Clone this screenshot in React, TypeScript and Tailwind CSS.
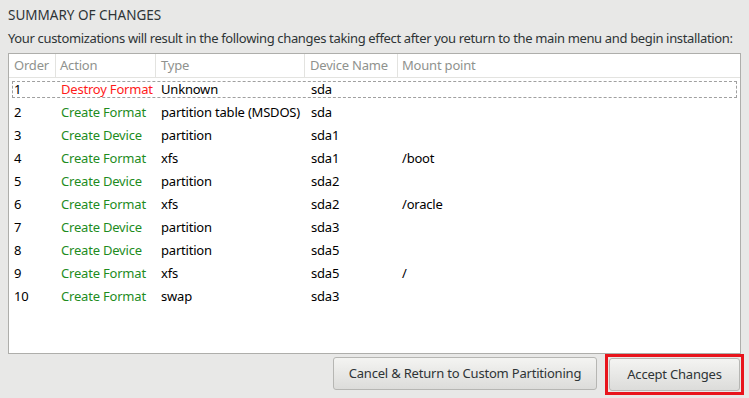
import React from "react";

const rows: [string, string, string, string, string][] = [
  ["1", "Destroy Format", "Unknown", "sda", ""],
  ["2", "Create Format", "partition table (MSDOS)", "sda", ""],
  ["3", "Create Device", "partition", "sda1", ""],
  ["4", "Create Format", "xfs", "sda1", "/boot"],
  ["5", "Create Device", "partition", "sda2", ""],
  ["6", "Create Format", "xfs", "sda2", "/oracle"],
  ["7", "Create Device", "partition", "sda3", ""],
  ["8", "Create Device", "partition", "sda5", ""],
  ["9", "Create Format", "xfs", "sda5", "/"],
  ["10", "Create Format", "swap", "sda3", ""],
];

export default function App() {
  return (
    <div
      className="w-[749px] h-[398px] bg-[#e8e8e7] text-[#2e3436] text-[13px] tracking-[-0.2px] flex flex-col overflow-hidden"
      style={{ fontFamily: '"Noto Sans", sans-serif' }}
    >
      <div className="pl-[8px] pt-[5px] leading-[20px] h-[25px] text-[13.5px] tracking-[0px]">SUMMARY OF CHANGES</div>
      <div className="pl-[8px] pt-[3px] leading-[20px] h-[28px] whitespace-nowrap tracking-[-0.35px]">
        Your customizations will result in the following changes taking effect after you return to the main menu and begin installation:
      </div>
      <div className="ml-[8px] w-[733px] h-[301px] bg-white border border-[#aeaeab] flex flex-col">
        <div className="flex h-[24px] border-b border-[#e3e3e0] text-[#8f928e] leading-[23px]">
          <div className="w-[47px] pl-[5px] border-r border-[#e3e3e0]">Order</div>
          <div className="w-[100px] pl-[4px] border-r border-[#e3e3e0]">Action</div>
          <div className="w-[149px] pl-[5px] border-r border-[#e3e3e0]">Type</div>
          <div className="w-[93px] pl-[5px] border-r border-[#e3e3e0]">Device Name</div>
          <div className="flex-1 pl-[4px]">Mount point</div>
        </div>
        <div className="flex flex-col">
          {rows.map((r, i) => (
            <div key={i} className="h-[23px] px-[3px] py-[3px]">
              <div
                className={
                  "flex h-full items-center text-black border " +
                  (i === 0 ? "border-dashed border-[#a0a0a0]" : "border-transparent")
                }
              >
                <div className="w-[48px] pl-[1px]">{r[0]}</div>
                <div className={"w-[100px] " + (r[1].startsWith("Destroy") ? "text-[#ff1a1a]" : "text-[#1e8c1e]")}>
                  {r[1]}
                </div>
                <div className="w-[150px]">{r[2]}</div>
                <div className="w-[91px]">{r[3]}</div>
                <div className="flex-1">{r[4]}</div>
              </div>
            </div>
          ))}
        </div>
      </div>
      <div className="flex justify-end gap-[8px] pr-[5px]">
        <div className="mt-[3px] h-[33px] w-[264px] rounded-[3px] border border-[#b6b6b3] bg-gradient-to-b from-[#f4f4f2] to-[#dcdcda] flex items-center justify-center text-[#2e3436]">
          Cancel &amp; Return to Custom Partitioning
        </div>
        <div className="h-[41px] w-[139px] border-[3px] border-[#e8141c] p-[1px]">
          <div className="h-full w-full rounded-[3px] border border-[#b6b6b3] bg-gradient-to-b from-[#f4f4f2] to-[#dcdcda] flex items-center justify-center text-[#2e3436]">
            Accept Changes
          </div>
        </div>
      </div>
    </div>
  );
}
